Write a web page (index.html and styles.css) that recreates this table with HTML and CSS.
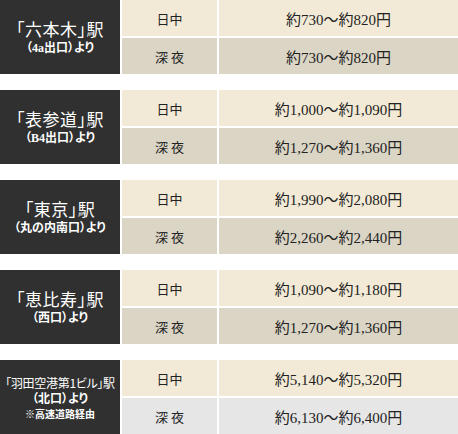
FILE: index.html
```html
<!DOCTYPE html>
<html lang="ja">
<head>
<meta charset="utf-8">
<link rel="stylesheet" href="styles.css">
</head>
<body>
<div class="list">
  <div class="block">
    <div class="station"><span class="name">「六本木」駅</span><span class="sub">（4a出口）より</span></div>
    <div class="label day">日中</div>
    <div class="price day">約730～約820円</div>
    <div class="label night">深夜</div>
    <div class="price night">約730～約820円</div>
  </div>
  <div class="block">
    <div class="station"><span class="name">「表参道」駅</span><span class="sub">（B4出口）より</span></div>
    <div class="label day">日中</div>
    <div class="price day">約1,000～約1,090円</div>
    <div class="label night">深夜</div>
    <div class="price night">約1,270～約1,360円</div>
  </div>
  <div class="block">
    <div class="station"><span class="name">「東京」駅</span><span class="sub">（丸の内南口）より</span></div>
    <div class="label day">日中</div>
    <div class="price day">約1,990～約2,080円</div>
    <div class="label night">深夜</div>
    <div class="price night">約2,260～約2,440円</div>
  </div>
  <div class="block">
    <div class="station"><span class="name">「恵比寿」駅</span><span class="sub">（西口）より</span></div>
    <div class="label day">日中</div>
    <div class="price day">約1,090～約1,180円</div>
    <div class="label night">深夜</div>
    <div class="price night">約1,270～約1,360円</div>
  </div>
  <div class="block">
    <div class="station"><span class="name small">「羽田空港第1ビル」駅</span><span class="sub">（北口）より</span><span class="note">※高速道路経由</span></div>
    <div class="label day">日中</div>
    <div class="price day">約5,140～約5,320円</div>
    <div class="label grey">深夜</div>
    <div class="price grey">約6,130～約6,400円</div>
  </div>
</div>
</body>
</html>
```
FILE: styles.css
```css
html, body {
  margin: 0;
  padding: 0;
  background: #ffffff;
}
body {
  width: 458px;
  font-family: "Liberation Serif", "Noto Sans CJK JP", serif;
  color: #222222;
}
.list {
  display: flex;
  flex-direction: column;
  gap: 16px;
}
.block {
  display: grid;
  grid-template-columns: 120px 95px 1fr;
  grid-template-rows: 36px 36px;
  gap: 2px;
}
.station {
  grid-row: 1 / span 2;
  grid-column: 1;
  background: #303030;
  color: #ffffff;
  display: flex;
  flex-direction: column;
  align-items: center;
  justify-content: center;
  text-align: center;
  white-space: nowrap;
  font-feature-settings: "palt" 1;
}
.name {
  font-size: 17px;
  line-height: 20px;
  font-family: "Noto Sans CJK JP", sans-serif;
  letter-spacing: 0.5px;
}
.name.small {
  font-size: 12px;
  line-height: 15px;
  letter-spacing: -0.3px;
}
.sub {
  font-size: 12px;
  line-height: 14px;
  margin-top: 2px;
  font-family: "Liberation Serif", "Noto Sans CJK JP", serif;
  font-weight: bold;
}
.note {
  font-size: 10px;
  line-height: 13px;
  margin-top: 1px;
  font-family: "Noto Sans CJK JP", sans-serif;
  font-weight: bold;
}
.label, .price {
  display: flex;
  align-items: center;
  justify-content: center;
}
.label {
  font-size: 13px;
  font-family: "Noto Sans CJK JP", sans-serif;
}
.night.label, .grey.label {
  letter-spacing: 3px;
  padding-left: 3px;
}
.price {
  font-size: 15px;
}
.day {
  background: #f2ead6;
}
.night {
  background: #dad5c5;
}
.grey {
  background: #e6e6e6;
}
```
